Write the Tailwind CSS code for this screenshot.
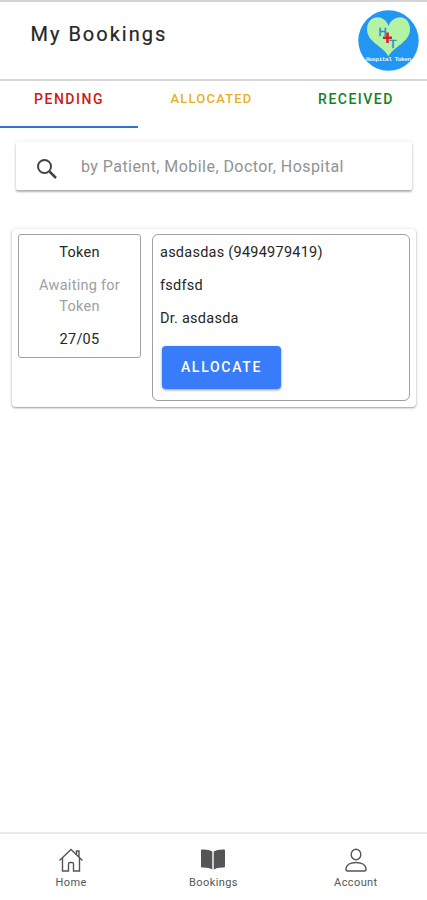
<!DOCTYPE html>
<html lang="en">
<head>
  <meta charset="UTF-8" />
  <meta name="viewport" content="width=device-width, initial-scale=1.0" />
  <title>My Bookings</title>
  <script src="https://cdn.jsdelivr.net/npm/@tailwindcss/browser@4"></script>
</head>
<body class="bg-white font-[Roboto,sans-serif] text-[#262626]">
  <div class="flex flex-col h-screen overflow-hidden border-t-2 border-[#d4d4d4]">

    <header class="flex items-start justify-between h-[79px] shrink-0 pl-[30.5px] pr-2 border-b-2 border-[#d6d6d6]">
      <h1 class="mt-[17px] text-[20px] leading-[30px] font-normal tracking-[2px] [-webkit-text-stroke:0.2px]">My Bookings</h1>
      <svg class="mt-2 w-[61px] h-[61px]" viewBox="0 0 61 61">
        <circle cx="30.5" cy="30.5" r="30.2" fill="#2196f3" />
        <path d="M30.5 46.500C26 37 9 32 9 19.500C9 5 26 3 30.500 16C36 3 52 5 52 19.500C52 32 35 37 30.500 46.500Z" fill="#b4f2a4" />
        <text x="20.500" y="26" font-size="11.500" font-family="Roboto, sans-serif" fill="#2b8fd8" stroke="#2b8fd8" stroke-width=".5">H</text>
        <text x="31.500" y="37.500" font-size="11.500" font-family="Roboto, sans-serif" fill="#2b8fd8" stroke="#2b8fd8" stroke-width=".5">T</text>
        <path d="M29.500 22.500V33M25 27.700H34" stroke="#d8202c" stroke-width="2.600" />
        <text x="30.500" y="51" text-anchor="middle" textLength="45" font-size="6" font-weight="bold" font-family="Liberation Mono, monospace" fill="#e8f6ff">Hospital Token</text>
      </svg>
    </header>

    <nav class="flex h-[47px] shrink-0 text-[14px] leading-[20px] font-medium text-center">
      <div class="w-[138px] pt-2 border-b-2 border-[#2f74d0] text-[#cf1717] tracking-[1.5px]">PENDING</div>
      <div class="w-[147px] pt-2 text-[#e8b023] text-[13px] tracking-[1.2px]">ALLOCATED</div>
      <div class="w-[142px] pt-2 text-[#16801c] tracking-[1.5px]">RECEIVED</div>
    </nav>

    <main class="flex-1">
      <div class="flex items-center h-[48px] mt-[14px] ml-4 mr-[15px] pl-5 rounded-xs shadow-[0_2px_2px_rgba(0,0,0,0.28),0_0_4px_rgba(0,0,0,0.1)]">
        <svg class="w-[22px] h-[22px] mt-1.5" viewBox="0 0 22 22" fill="none" stroke="#444" stroke-width="2">
          <circle cx="8.500" cy="8.500" r="6.500" />
          <path d="M13.500 13.500L20 20" stroke-width="2.500" />
        </svg>
        <div class="ml-[23px] mt-px w-[262px] overflow-hidden whitespace-nowrap text-[16px] leading-[24px] tracking-[0.45px] text-[#929292]">by Patient, Mobile, Doctor, Hospital</div>
      </div>

      <div class="flex items-start h-[178px] mt-[39px] ml-3 mr-[11px] pt-[5px] pl-1.5 rounded-sm shadow-[0_1px_2px_rgba(0,0,0,0.35),0_0_4px_rgba(0,0,0,0.1)] text-[14.500px] leading-[21px]">
        <div class="flex flex-col gap-3 w-[123px] h-[124px] pt-[7px] px-3 border border-[#a0a0a0] rounded-[3px] text-center">
          <p class="tracking-[0.25px]">Token</p>
          <p class="tracking-[0.25px] text-[#a0a0a0]">Awaiting for Token</p>
          <p class="tracking-[0.25px]">27/05</p>
        </div>
        <div class="flex flex-col items-start gap-3 w-[258px] h-[167px] ml-[11px] pt-[7px] pl-[7px] border border-[#a0a0a0] rounded-md">
          <p class="tracking-[0.25px]">asdasdas (9494979419)</p>
          <p class="tracking-[0.25px]">fsdfsd</p>
          <p class="tracking-[0.25px]">Dr. asdasda</p>
          <button class="ml-0.5 mt-[5px] pb-0.5 w-[119px] h-[43px] rounded-sm bg-[#387cfa] text-white text-[14px] leading-[20px] font-medium tracking-[1.7px] shadow-[0_1px_3px_rgba(0,0,0,0.4)]">ALLOCATE</button>
        </div>
      </div>
    </main>

    <footer class="grid grid-cols-3 h-[68px] shrink-0 border-t-2 border-[#ebebeb] text-[11px] leading-[14px] tracking-[0.4px] text-[#555]">
      <div class="flex flex-col items-center pt-[13px]">
        <svg class="w-[26px] h-[26px]" viewBox="0 0 26 26" fill="none" stroke="#555" stroke-width="1.400">
          <path d="M1.500 13.500L13 2.500L24.500 13.500" />
          <path d="M4.500 11V24H10.500V17Q10.500 15.500 12 15.500H14Q15.500 15.500 15.500 17V24H21.500V11M18.500 7.500V4H21V10" />
        </svg>
        <span class="mt-[3px]">Home</span>
      </div>
      <div class="flex flex-col items-center pt-[13px]">
        <svg class="w-[26px] h-[26px]" viewBox="0 0 26 26" fill="#555">
          <path d="M1 3.500Q1 2.500 2 2.500Q9 2.300 12.300 4.500V22.500Q9 20.300 2 20.500Q1 20.500 1 19.500Z" />
          <path d="M25 3.500Q25 2.500 24 2.500Q17 2.300 13.700 4.500V22.500Q17 20.300 24 20.500Q25 20.500 25 19.500Z" />
        </svg>
        <span class="mt-[3px]">Bookings</span>
      </div>
      <div class="flex flex-col items-center pt-[13px]">
        <svg class="w-[26px] h-[26px]" viewBox="0 0 26 26" fill="none" stroke="#555" stroke-width="1.400">
          <ellipse cx="13" cy="7.500" rx="4.800" ry="5.300" />
          <path d="M3 22.500C3 17.500 8 15.500 13 15.500C18 15.500 23 17.500 23 22.500Q23 24 21.500 24H4.500Q3 24 3 22.500Z" />
        </svg>
        <span class="mt-[3px]">Account</span>
      </div>
    </footer>
  </div>
</body>
</html>
